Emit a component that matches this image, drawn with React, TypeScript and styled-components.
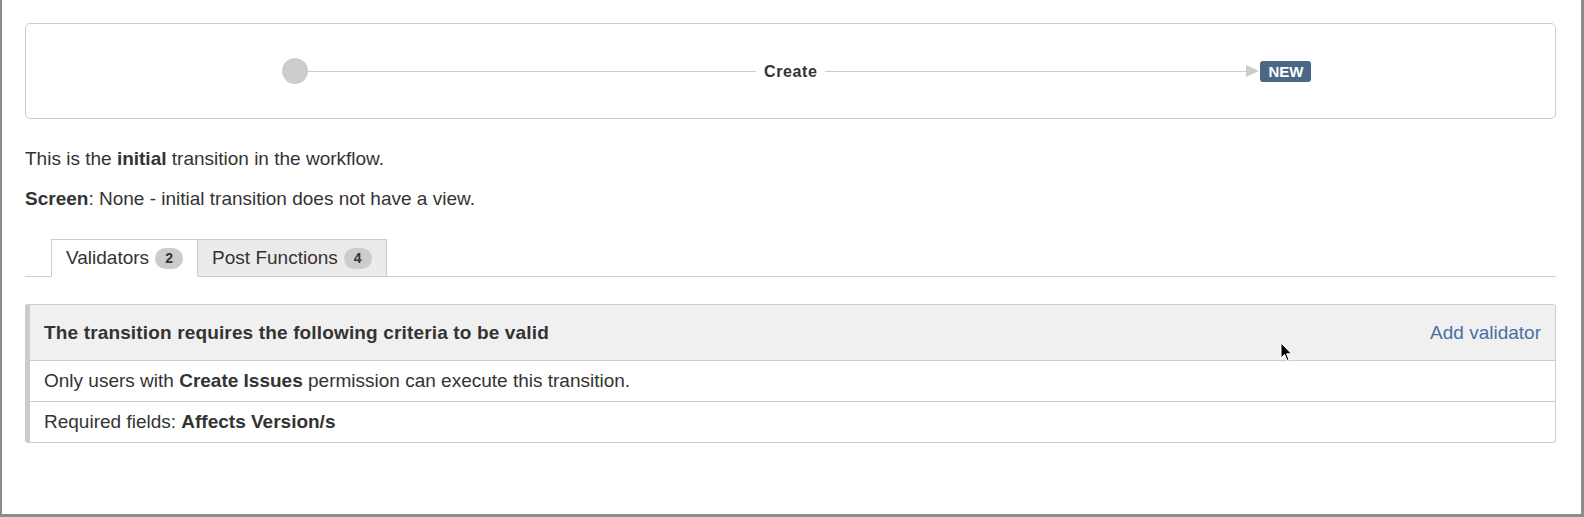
import * as React from "react";
import styled, {createGlobalStyle} from "styled-components";

const GlobalStyle = createGlobalStyle`
  html, body {
    margin: 0;
    padding: 0;
    background: #fff;
  }
  body {
    font-family: "Liberation Sans", Arial, sans-serif;
    color: #333;
  }
`

const Frame = styled.div`
  position: relative;
  box-sizing: border-box;
  width: 1584px;
  height: 517px;
  border-left: 2px solid #8c8c8c;
  border-right: 3px solid #8c8c8c;
  border-bottom: 3px solid #8c8c8c;
  padding: 23px 25px 0 23px;
  background: #fff;
  overflow: hidden;
`

const Diagram = styled.div`
  box-sizing: border-box;
  height: 96px;
  padding-left: 256px;
  border: 1px solid #ccc;
  border-radius: 5px;
  display: flex;
  align-items: center;
`

const Node = styled.span`
  width: 26px;
  height: 26px;
  border-radius: 50%;
  background: #ccc;
  flex: none;
`

const Line = styled.span<{ $w: number }>`
  width: ${({$w}) => $w}px;
  height: 1px;
  background: #ccc;
  flex: none;
`

const TransitionLabel = styled.span`
  margin: 1px 8px 0;
  font-size: 16px;
  font-weight: bold;
  letter-spacing: 0.6px;
  color: #333;
`

const Arrow = styled.span`
  width: 0;
  height: 0;
  border-top: 6px solid transparent;
  border-bottom: 6px solid transparent;
  border-left: 13px solid #ccc;
  margin-right: 1px;
  flex: none;
`

const Status = styled.span`
  box-sizing: border-box;
  height: 21px;
  padding: 0 8px;
  border-radius: 3px;
  background: #4a6785;
  color: #fff;
  font-size: 15px;
  font-weight: bold;
  line-height: 21px;
  text-transform: uppercase;
`

const Para = styled.p<{ $top: number }>`
  margin: ${({$top}) => $top}px 0 0;
  font-size: 19px;
  line-height: 27px;
`

const TabStrip = styled.div`
  margin-top: 27px;
  padding-left: 26px;
  display: flex;
  border-bottom: 1px solid #ccc;
`

const Tab = styled.div<{ $active?: boolean }>`
  box-sizing: border-box;
  height: ${({$active}) => $active ? 38 : 37}px;
  margin-bottom: ${({$active}) => $active ? -1 : 0}px;
  display: flex;
  align-items: center;
  gap: 6px;
  padding: 0 14px 0 14px;
  border: 1px solid #ccc;
  border-bottom: ${({$active}) => $active ? '1px solid #fff' : 'none'};
  border-left-width: ${({$active}) => $active ? 1 : 0}px;
  background: ${({$active}) => $active ? '#fff' : '#ebebeb'};
  font-size: 19px;
  color: #333;
`

const Count = styled.span`
  min-width: 28px;
  height: 21px;
  border-radius: 11px;
  background: #ccc;
  font-size: 14px;
  font-weight: bold;
  line-height: 21px;
  text-align: center;
  color: #333;
`

const Panel = styled.div`
  margin-top: 27px;
  border: 1px solid #ccc;
  border-left: 5px solid #ccc;
  border-radius: 3px;
  font-family: "Liberation Sans Narrow", "Arial Narrow", "Liberation Sans", sans-serif;
  font-size: 19px;
  color: #333;
`

const PanelHead = styled.div`
  height: 55px;
  display: flex;
  align-items: center;
  justify-content: space-between;
  padding: 0 14px;
  background: #f0f0f0;
  border-bottom: 1px solid #ccc;
`

const HeadTitle = styled.span`
  font-weight: bold;
  letter-spacing: 0.15px;
`

const AddLink = styled.a`
  font-family: "Liberation Sans", Arial, sans-serif;
  color: #4a6fa0;
  text-decoration: none;
  cursor: pointer;
`

const Row = styled.div<{ $last?: boolean }>`
  height: 40px;
  display: flex;
  align-items: center;
  padding: 0 14px;
  border-bottom: ${({$last}) => $last ? 'none' : '1px solid #ccc'};
`

const Pointer = styled.svg`
  position: absolute;
  left: 1278px;
  top: 342px;
`

export default function App() {
  return (
    <>
      <GlobalStyle/>
      <Frame>
        <Diagram>
          <Node/>
          <Line $w={448}/>
          <TransitionLabel>Create</TransitionLabel>
          <Line $w={421}/>
          <Arrow/>
          <Status>New</Status>
        </Diagram>

        <Para $top={26}>This is the <b>initial</b> transition in the workflow.</Para>
        <Para $top={13}><b>Screen</b>: None - initial transition does not have a view.</Para>

        <TabStrip>
          <Tab $active>Validators <Count>2</Count></Tab>
          <Tab>Post Functions <Count>4</Count></Tab>
        </TabStrip>

        <Panel>
          <PanelHead>
            <HeadTitle>The transition requires the following criteria to be valid</HeadTitle>
            <AddLink>Add validator</AddLink>
          </PanelHead>
          <Row>Only users with&nbsp;<b>Create Issues</b>&nbsp;permission can execute this transition.</Row>
          <Row $last>Required fields:&nbsp;<b>Affects Version/s</b></Row>
        </Panel>

        <Pointer width="13" height="20" viewBox="0 0 13 20">
          <path d="M1 1 L1 16 L4.5 12.5 L7 18.5 L9 17.6 L6.6 11.8 L11.5 11.8 Z" fill="#000" stroke="#fff" strokeWidth="1"/>
        </Pointer>
      </Frame>
    </>
  );
}
